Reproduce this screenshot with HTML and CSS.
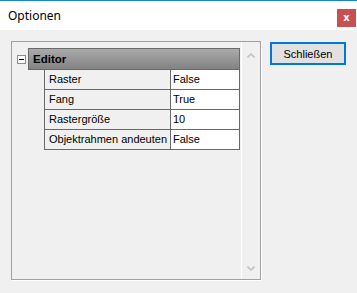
FILE: index.html
```html
<!DOCTYPE html>
<html lang="de">
<head>
    <meta charset="UTF-8">
    <meta name="viewport" content="width=device-width, initial-scale=1.0">
    <title>Optionen</title>
    <link rel="stylesheet" href="styles.css">
</head>
<body>

    <div class="window">
        <div class="titlebar">
            <span class="title">Optionen</span>
            <button class="close">x</button>
        </div>

        <div class="content">
            <!-- property grid with the single "Editor" category -->
            <div class="grid-box">
                <div class="grid-area">
                    <div class="category">
                        <span class="toggle"><span class="minus"></span></span>
                        <div class="category-head">Editor</div>
                    </div>
                    <div class="props">
                        <div class="prop"><div class="name">Raster</div><div class="value">False</div></div>
                        <div class="prop"><div class="name">Fang</div><div class="value">True</div></div>
                        <div class="prop"><div class="name">Rastergröße</div><div class="value">10</div></div>
                        <div class="prop"><div class="name">Objektrahmen andeuten</div><div class="value">False</div></div>
                    </div>
                </div>
                <div class="scrollbar">
                    <svg width="8" height="5" viewBox="0 0 8 5"><polyline points="0.5,4.5 4,1 7.5,4.5" fill="none" stroke="#c2c2c2" stroke-width="1.6"/></svg>
                    <svg width="8" height="5" viewBox="0 0 8 5"><polyline points="0.5,0.5 4,4 7.5,0.5" fill="none" stroke="#c2c2c2" stroke-width="1.6"/></svg>
                </div>
            </div>

            <button class="close-btn">Schließen</button>
        </div>
    </div>

</body>
</html>
```

FILE: styles.css
```css
body {
    margin: 0;
    background-color: #f0f0f0;
    font-family: "Liberation Sans", Arial, sans-serif;
    font-size: 11px;
    color: #000;
}

.window {
    width: 357px;
    height: 293px;
}

.titlebar {
    display: flex;
    justify-content: space-between;
    height: 29px;
    border-top: 1px solid #1883d7;
    background-color: #fff;
}

.title {
    padding-left: 8px;
    font-family: "Noto Sans", "Liberation Sans", sans-serif;
    font-size: 12px;
    line-height: 29px;
}

.close {
    width: 19px;
    height: 18px;
    margin: 8px 1px 0 0;
    padding: 0;
    border: none;
    background-color: #c75050;
    color: #fff;
    font-family: "DejaVu Sans", sans-serif;
    font-size: 10px;
    font-weight: bold;
    line-height: 16px;
}

.content {
    display: flex;
    align-items: flex-start;
    padding: 11px 0 0 11px;
}

.grid-box {
    display: flex;
    width: 250px;
    height: 239px;
    box-sizing: border-box;
    border: 1px solid #a0a0a0;
    box-shadow: 1px 1px 0 #fff;
}

.grid-area {
    flex: 1;
    padding-top: 6px;
}

.category {
    display: flex;
    align-items: center;
}

.toggle {
    display: flex;
    justify-content: center;
    align-items: center;
    width: 9px;
    height: 9px;
    margin-left: 5px;
    box-sizing: border-box;
    border: 1px solid #8c8c8c;
    background-color: #fff;
}

.minus {
    width: 5px;
    height: 1px;
    background-color: #000;
}

.category-head {
    width: 212px;
    height: 22px;
    margin-left: 2px;
    box-sizing: border-box;
    padding-left: 4px;
    border: 1px solid #696969;
    background: linear-gradient(#aaaaaa, #828282);
    font-weight: bold;
    font-size: 11.5px;
    line-height: 20px;
}

.props {
    width: 196px;
    margin-left: 32px;
    box-sizing: border-box;
    border-left: 1px solid #696969;
    border-right: 1px solid #696969;
}

.prop {
    display: flex;
    height: 20px;
    box-sizing: border-box;
    border-bottom: 1px solid #696969;
    line-height: 19px;
}

.name {
    width: 126px;
    box-sizing: border-box;
    padding-left: 4px;
    border-right: 1px solid #696969;
    white-space: nowrap;
}

.value {
    flex: 1;
    padding-left: 2px;
    background-color: #fff;
}

.scrollbar {
    display: flex;
    flex-direction: column;
    justify-content: space-between;
    align-items: center;
    width: 18px;
    padding: 11px 0 8px;
    border-left: 1px solid #fff;
}

.close-btn {
    width: 76px;
    height: 23px;
    margin: 1px 0 0 9px;
    padding: 0;
    border: 2px solid #0078d7;
    background-color: #e1e1e1;
    font-family: "Liberation Sans", Arial, sans-serif;
    font-size: 11px;
    color: #000;
}
```
